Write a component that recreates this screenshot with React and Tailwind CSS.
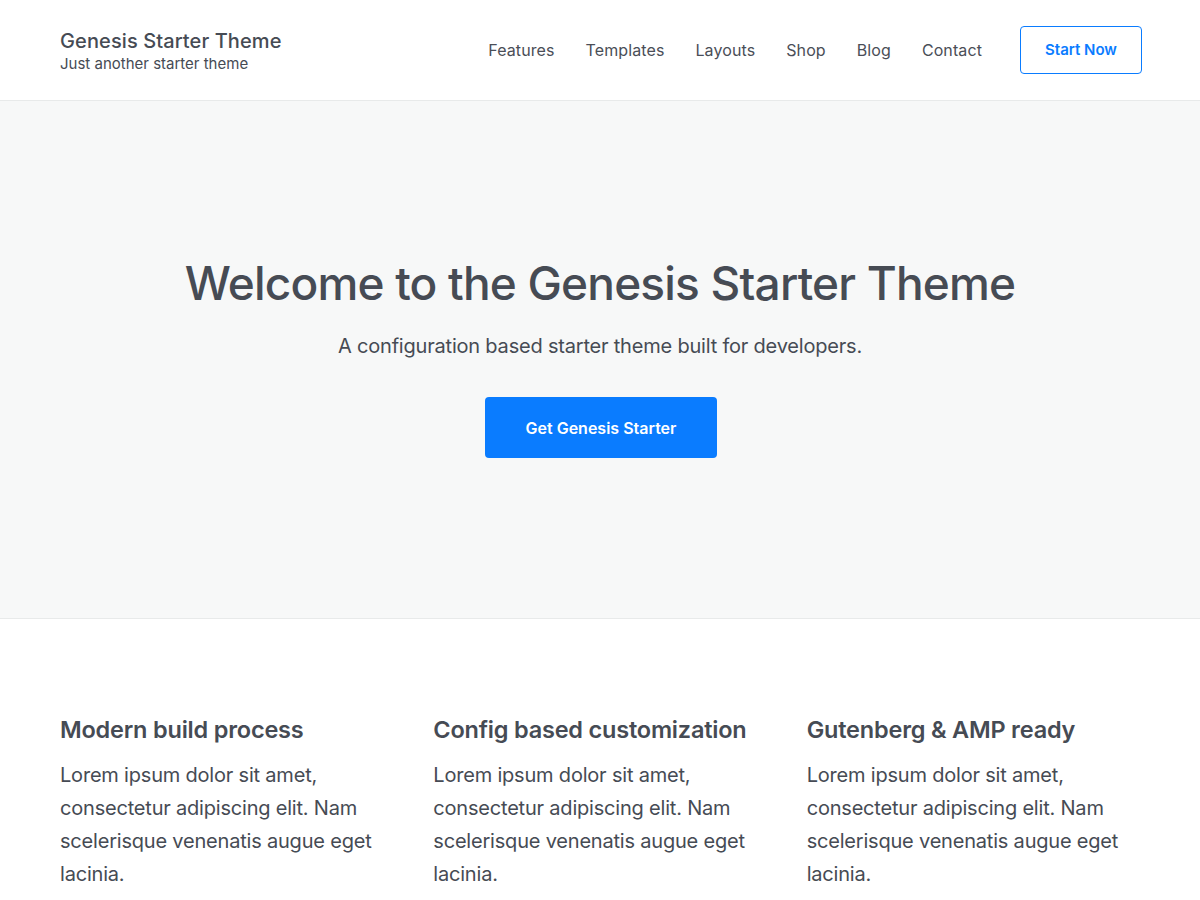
const navItems = ['Features', 'Templates', 'Layouts', 'Shop', 'Blog', 'Contact'];

const features = [
  { title: 'Modern build process' },
  { title: 'Config based customization' },
  { title: 'Gutenberg & AMP ready' },
];

const lorem =
  'Lorem ipsum dolor sit amet, consectetur adipiscing elit. Nam scelerisque venenatis augue eget lacinia.';

export default function App() {
  return (
    <div className="min-h-[900px] bg-white text-[#464b54]" style={{ fontFamily: 'Inter, "Noto Sans", sans-serif' }}>
      <header className="h-[101px] border-b border-[#e8eaea]">
        <div className="ml-[60px] flex h-full w-[1082px] items-center justify-between">
          <div className="pt-[2px]">
            <p className="text-[20px] leading-[26px] font-medium tracking-[0.1px]">Genesis Starter Theme</p>
            <p className="text-[15px] leading-[20px]">Just another starter theme</p>
          </div>
          <nav className="flex items-center">
            <ul className="flex items-center gap-[31px] text-[16px] tracking-[0.1px]">
              {navItems.map((item) => (
                <li key={item}>
                  <a href="#" className="text-[#4a4e57]">
                    {item}
                  </a>
                </li>
              ))}
            </ul>
            <a
              href="#"
              className="ml-[38px] flex h-[48px] w-[122px] items-center justify-center rounded-[4px] border border-[#0a7cff] text-[15px] font-semibold text-[#0a7cff]"
            >
              Start Now
            </a>
          </nav>
        </div>
      </header>

      <section className="flex h-[518px] flex-col items-center border-b border-[#e8eaea] bg-[#f7f8f8] pt-[154px]">
        <h1 className="text-[46px] leading-[56px] font-medium tracking-[-0.8px]">
          Welcome to the Genesis Starter Theme
        </h1>
        <p className="mt-[20px] text-[20px] leading-[30px] tracking-[-0.2px]">
          A configuration based starter theme built for developers.
        </p>
        <a
          href="#"
          className="ml-[2px] mt-[36px] flex h-[61px] w-[232px] items-center justify-center rounded-[4px] bg-[#0a7cff] text-[16px] font-semibold text-white"
        >
          Get Genesis Starter
        </a>
      </section>

      <section className="mx-auto grid w-[1080px] grid-cols-3 gap-x-[40px] pt-[95px]">
        {features.map((f) => (
          <div key={f.title}>
            <h2 className="text-[23.5px] leading-[32px] font-semibold tracking-[-0.2px]">{f.title}</h2>
            <p className="mt-[13px] text-[20px] leading-[33px] tracking-[-0.2px]">{lorem}</p>
          </div>
        ))}
      </section>
    </div>
  );
}
